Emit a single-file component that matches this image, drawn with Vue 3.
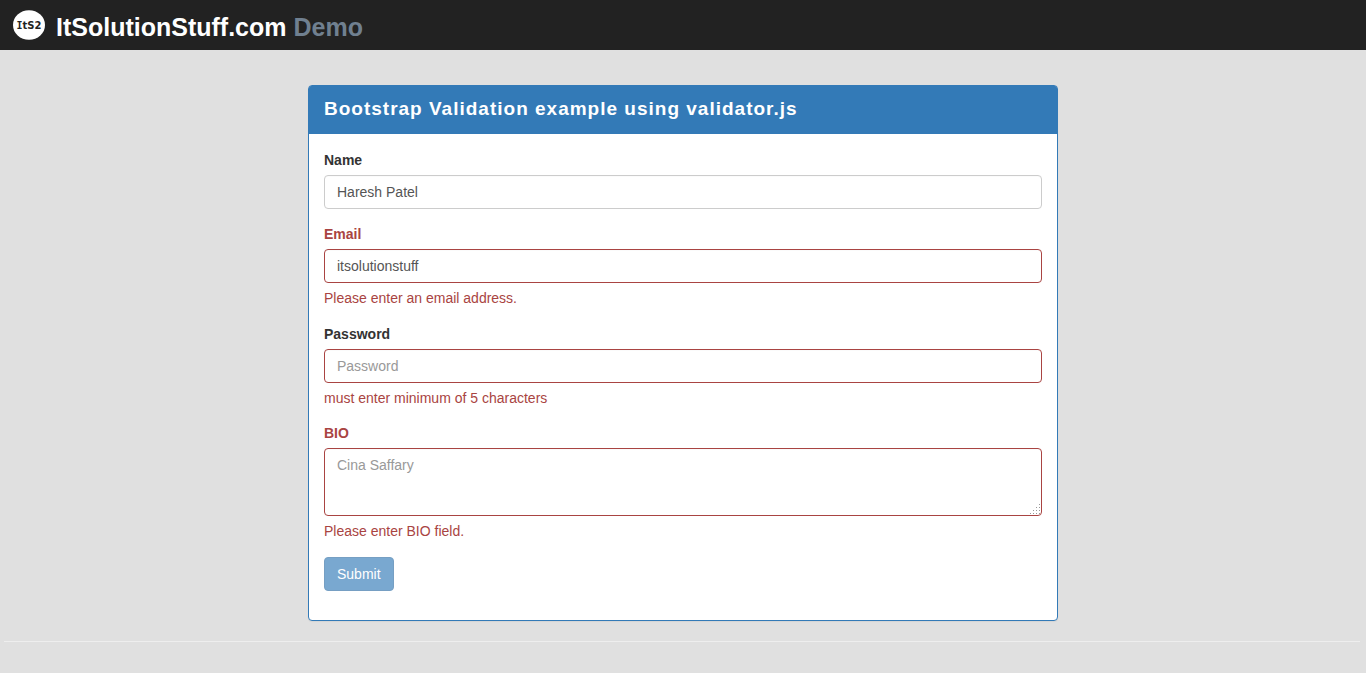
<script setup>
import { ref } from 'vue'

const name = ref('Haresh Patel')
const email = ref('itsolutionstuff')
const password = ref('')
const bio = ref('')
</script>

<template>
  <header class="navbar">
    <a class="brand" href="#">
      <svg class="logo" viewBox="0 0 32 30" aria-hidden="true">
        <ellipse cx="16" cy="15" rx="16" ry="14.8" fill="#fff" />
        <text x="16" y="19" text-anchor="middle" class="logo-text"><tspan class="slab">I</tspan>tS2</text>
      </svg>
      <span class="brand-name">ItSolutionStuff.com <span class="demo">Demo</span></span>
    </a>
  </header>

  <main class="container">
    <section class="panel">
      <div class="panel-heading">
        <h1>Bootstrap Validation example using validator.js</h1>
      </div>
      <form class="panel-body" novalidate @submit.prevent>
        <div class="form-group">
          <label for="name">Name</label>
          <input id="name" v-model="name" class="form-control" type="text" />
        </div>
        <div class="form-group has-error">
          <label for="email">Email</label>
          <input id="email" v-model="email" class="form-control" type="email" aria-describedby="email-help" />
          <div id="email-help" class="help-block">Please enter an email address.</div>
        </div>
        <div class="form-group">
          <label for="password">Password</label>
          <input id="password" v-model="password" class="form-control invalid" type="password" placeholder="Password" aria-describedby="password-help" />
          <div id="password-help" class="help-block">must enter minimum of 5 characters</div>
        </div>
        <div class="form-group has-error">
          <label for="bio">BIO</label>
          <div class="textarea-wrap">
            <textarea id="bio" v-model="bio" class="form-control" placeholder="Cina Saffary" aria-describedby="bio-help"></textarea>
            <svg class="grip" viewBox="0 0 11 11" aria-hidden="true">
              <path d="M9 0h1v1h-1zM6 3h1v1h-1zM9 3h1v1h-1zM3 6h1v1h-1zM6 6h1v1h-1zM9 6h1v1h-1zM0 9h1v1h-1zM3 9h1v1h-1zM6 9h1v1h-1zM9 9h1v1h-1z" fill="#999" />
            </svg>
          </div>
          <div id="bio-help" class="help-block">Please enter BIO field.</div>
        </div>
        <button class="submit" type="submit" disabled>Submit</button>
      </form>
    </section>
  </main>
  <hr class="divider" />
</template>

<style>
body {
  background: #e0e0e0;
}
</style>

<style scoped>
.navbar,
.container {
  font-family: "Liberation Sans", Arial, sans-serif;
}

.navbar {
  display: flex;
  align-items: center;
  height: 50px;
  padding: 0 13px;
  background: #222;
}

.brand {
  display: flex;
  align-items: center;
  gap: 11px;
  color: #fff;
  text-decoration: none;
}

.logo {
  width: 32px;
  height: 30px;
}

.logo-text {
  font: bold 10px "DejaVu Sans", sans-serif;
  fill: #222;
}

.slab {
  font-family: "DejaVu Sans Mono", monospace;
}

.brand-name {
  padding-top: 4px;
  font-size: 25px;
  font-weight: bold;
  line-height: 30px;
}

.demo {
  color: #708090;
}

.container {
  box-sizing: border-box;
  max-width: 750px;
  margin: 35px auto 20px;
  font-size: 14px;
  line-height: 20px;
  color: #333;
}

.panel {
  background: #fff;
  border: 1px solid #337ab7;
  border-radius: 4px;
  box-shadow: 0 1px 1px rgba(0, 0, 0, 0.05);
}

.panel-heading {
  padding: 11px 15px 13px;
  background: #337ab7;
  border-radius: 2px 2px 0 0;
}

h1 {
  margin: 0;
  color: #fff;
  font-size: 19px;
  font-weight: bold;
  line-height: 24px;
  letter-spacing: 1px;
}

.panel-body {
  padding: 16px 15px 29px;
}

.form-group {
  margin-bottom: 15px;
}

.form-group.has-error {
  margin-bottom: 16px;
}

label {
  display: block;
  margin-bottom: 5px;
  font-weight: bold;
}

.form-control {
  display: block;
  box-sizing: border-box;
  width: 100%;
  height: 34px;
  padding: 6px 12px;
  border: 1px solid #ccc;
  border-radius: 4px;
  background: #fff;
  box-shadow: inset 0 1px 1px rgba(0, 0, 0, 0.02);
  color: #555;
  font: inherit;
}

.form-control::placeholder {
  color: #999;
  opacity: 1;
}

textarea.form-control {
  height: 68px;
  resize: none;
}

.textarea-wrap {
  position: relative;
}

.grip {
  position: absolute;
  right: 1px;
  bottom: 1px;
  width: 11px;
  height: 11px;
  pointer-events: none;
}

.has-error label,
.help-block {
  color: #a94442;
}

.has-error .form-control,
.form-control.invalid {
  border-color: #a94442;
}

.help-block {
  margin-top: 5px;
}

.submit {
  display: block;
  height: 34px;
  padding: 6px 12px;
  border: 1px solid #2e6da4;
  border-radius: 4px;
  background: #337ab7;
  color: #fff;
  font: inherit;
  opacity: 0.65;
}

.divider {
  margin: 0 6px 0 4px;
  border: 0;
  border-top: 1px solid #eee;
}
</style>
